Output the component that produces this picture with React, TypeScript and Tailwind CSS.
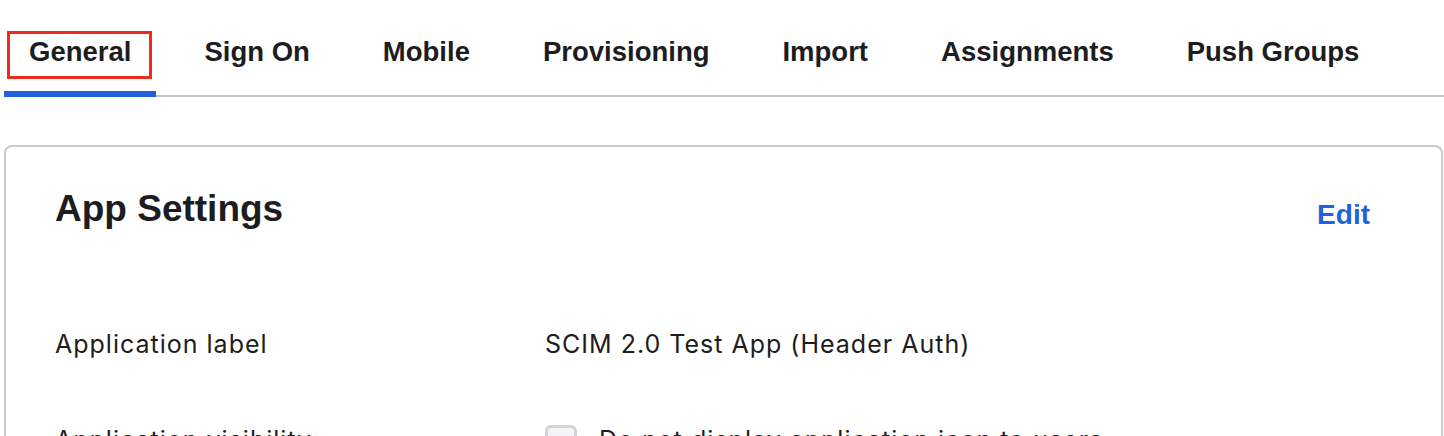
import React from "react";

const tabs = [
  "General",
  "Sign On",
  "Mobile",
  "Provisioning",
  "Import",
  "Assignments",
  "Push Groups",
];

const App: React.FC = () => {
  return (
    <div className="relative w-[1444px] h-[436px] overflow-hidden bg-white text-[#1d1d21]">
      {/* tabs */}
      <div className="pt-[36px] ml-[4px]">
        <nav className="flex gap-[23px] border-b-2 border-[#c4c4c9] font-['Liberation_Sans',Arial,sans-serif] font-bold">
          {tabs.map((t, i) => (
            <div
              key={t}
              className={
                i === 0
                  ? "px-[25px] pb-[23px] -mb-[2px] border-b-[6px] border-[#1f62dc] text-[27.5px] leading-[32px] whitespace-nowrap"
                  : "px-[25px] pb-[23px] -mb-[2px] border-b-[6px] border-transparent text-[27.5px] leading-[32px] whitespace-nowrap"
              }
            >
              {t}
            </div>
          ))}
        </nav>
      </div>

      {/* annotation box */}
      <div className="absolute left-[7px] top-[31px] w-[145px] h-[48px] border-[3px] border-[#f2291d]"></div>

      {/* card */}
      <div className="mt-[48px] ml-[4px] mr-[1px] border-2 border-[#c9c9ce] rounded-[8px] pt-[40px] pl-[49px] pr-[71px]">
        <div className="flex justify-between items-start font-['Liberation_Sans',Arial,sans-serif] font-bold">
          <h2 className="text-[37px] leading-[44px]">App Settings</h2>
          <a className="mt-[12px] text-[28px] leading-[32px] text-[#1f62dc]">Edit</a>
        </div>

        <div className="mt-[97px] grid grid-cols-[490px_1fr] gap-y-[64px] font-['Inter',sans-serif] text-[25px] leading-[32px] tracking-[1px]">
          <div>Application label</div>
          <div>SCIM 2.0 Test App (Header Auth)</div>
          <div>Application visibility</div>
          <div className="flex items-start gap-[22px]">
            <span className="mt-[1px] w-[32px] h-[32px] rounded-[6px] border-[3px] border-[#d3d3d7] bg-[#f4f4f6] shrink-0"></span>
            <span>Do not display application icon to users</span>
          </div>
        </div>
      </div>
    </div>
  );
};

export default App;
